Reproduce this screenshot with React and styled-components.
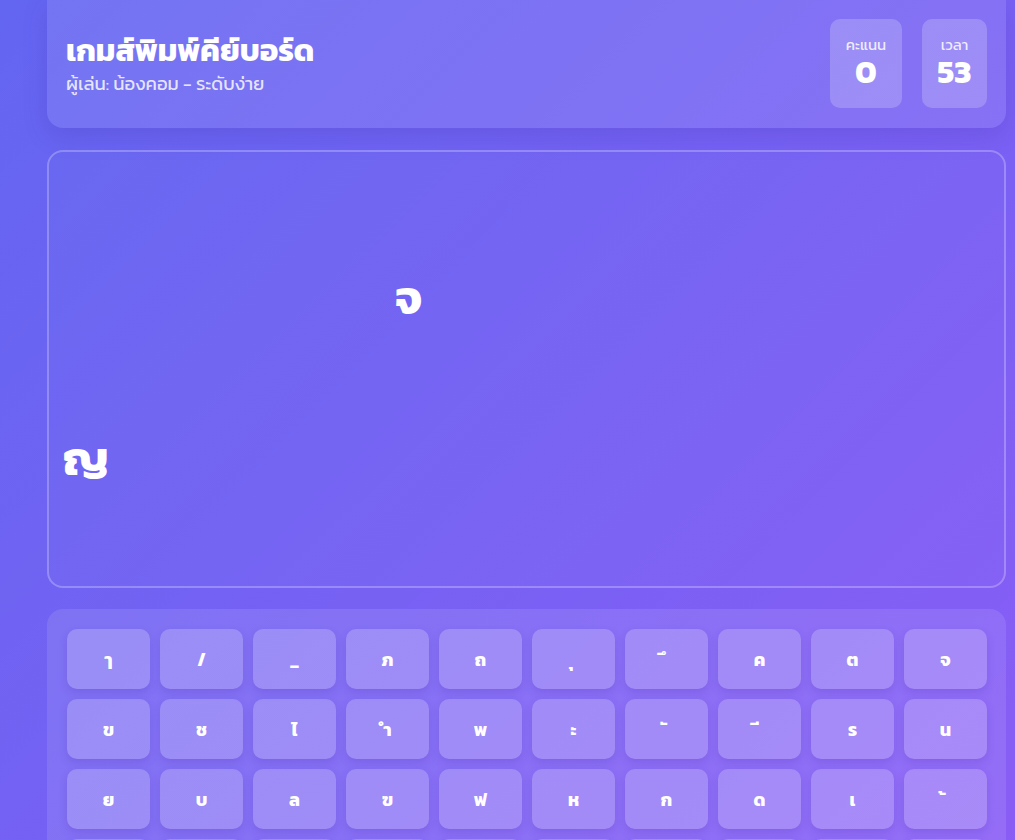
import React from "react";
import styled, { createGlobalStyle } from "styled-components";

const GlobalStyle = createGlobalStyle`
  html, body {
    margin: 0;
    padding: 0;
  }
  body {
    font-family: "Kanit", "Noto Sans Thai", "Noto Sans", "DejaVu Sans", sans-serif;
    color: #fff;
  }
`;

const keys = [
  ["ๅ", "/", "_", "ภ", "ถ", "ุ", "ึ", "ค", "ต", "จ"],
  ["ข", "ช", "ไ", "ำ", "พ", "ะ", "ั", "ี", "ร", "น"],
  ["ย", "บ", "ล", "ฃ", "ฟ", "ห", "ก", "ด", "เ", "้"],
  ["่", "า", "ส", "ว", "ง", "ผ", "ป", "แ", "อ", "ิ"],
];

// falling letters – position on the play field is the content
const falling = [
  { char: "จ", x: 346, y: 122 },
  { char: "ญ", x: 14, y: 283 },
];

const App = () => {
  return (
    <Page>
      <GlobalStyle />
      <Container>
        <Header>
          <div>
            <Title>เกมส์พิมพ์คีย์บอร์ด</Title>
            <Subtitle>ผู้เล่น: น้องคอม - ระดับง่าย</Subtitle>
          </div>
          <Stats>
            <StatBox width={72}>
              <span className="label">คะแนน</span>
              <span className="value">0</span>
            </StatBox>
            <StatBox width={65}>
              <span className="label">เวลา</span>
              <span className="value">53</span>
            </StatBox>
          </Stats>
        </Header>

        <GameArea>
          {falling.map((f, i) => (
            <FallingChar key={i} style={{ left: f.x, top: f.y }}>
              {f.char}
            </FallingChar>
          ))}
        </GameArea>

        <Keyboard>
          {keys.map((row, r) => (
            <KeyRow key={r}>
              {row.map((k, i) => (
                <Key key={i}>{k}</Key>
              ))}
            </KeyRow>
          ))}
        </Keyboard>
      </Container>
    </Page>
  );
};

export default App;

const Page = styled.div`
  min-height: 100vh;
  background: linear-gradient(135deg, #6366f1 0%, #8b5cf6 100%);
  overflow: hidden;
`;

const Container = styled.div`
  width: 959px;
  margin-left: 47px;
  display: flex;
  flex-direction: column;
  gap: 21px;
  padding-bottom: 40px;
`;

const Header = styled.div`
  height: 128px;
  margin-bottom: 1px;
  box-sizing: border-box;
  background: rgba(255, 255, 255, 0.1);
  border-radius: 0 0 16px 16px;
  box-shadow: 0 8px 24px rgba(60, 40, 160, 0.18);
  display: flex;
  align-items: center;
  justify-content: space-between;
  padding: 0 19px;
`;

const Title = styled.h1`
  margin: 0;
  font-size: 31px;
  font-weight: 700;
  line-height: 1.2;
`;

const Subtitle = styled.p`
  margin: 2px 0 0;
  font-size: 18.5px;
  line-height: 1.3;
  color: rgba(255, 255, 255, 0.82);
`;

const Stats = styled.div`
  display: flex;
  gap: 20px;
  margin-top: -1px;
`;

const StatBox = styled.div`
  width: ${(p) => p.width}px;
  height: 89px;
  border-radius: 10px;
  background: rgba(255, 255, 255, 0.2);
  display: flex;
  flex-direction: column;
  align-items: center;
  justify-content: center;
  gap: 1px;
  .label {
    font-size: 15px;
    line-height: 1.2;
    color: rgba(255, 255, 255, 0.85);
  }
  .value {
    font-size: 32px;
    font-weight: 700;
    line-height: 1.1;
  }
`;

const GameArea = styled.div`
  position: relative;
  height: 438px;
  box-sizing: border-box;
  border: 2px solid rgba(255, 255, 255, 0.25);
  border-radius: 16px;
  background: rgba(255, 255, 255, 0.02);
`;

const FallingChar = styled.span`
  position: absolute;
  font-size: 47px;
  font-weight: 700;
  line-height: 1;
`;

const Keyboard = styled.div`
  background: rgba(255, 255, 255, 0.1);
  border-radius: 16px;
  padding: 20px 19px 20px 20px;
  display: flex;
  flex-direction: column;
  gap: 10px;
`;

const KeyRow = styled.div`
  display: grid;
  grid-template-columns: repeat(10, 83px);
  gap: 10px;
`;

const Key = styled.div`
  height: 60px;
  border-radius: 10px;
  background: rgba(255, 255, 255, 0.2);
  box-shadow: 0 4px 8px rgba(70, 40, 170, 0.18);
  display: flex;
  align-items: center;
  justify-content: center;
  font-size: 18px;
  font-weight: 700;
`;
